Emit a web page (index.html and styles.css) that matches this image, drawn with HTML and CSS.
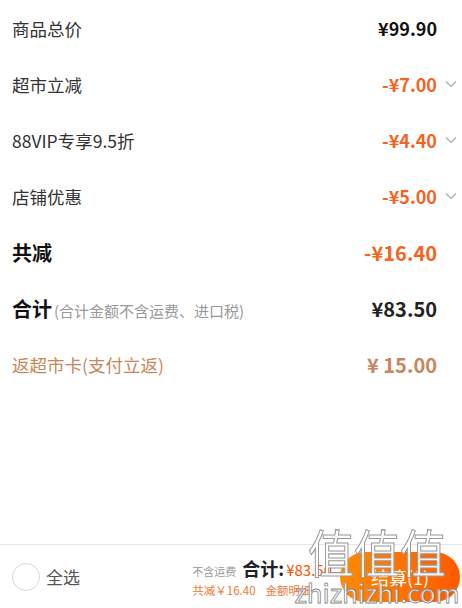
FILE: index.html
```html
<!DOCTYPE html>
<html lang="zh-CN">
<head>
    <meta charset="UTF-8">
    <meta name="viewport" content="width=device-width, initial-scale=1.0">
    <title>结算明细</title>
    <link rel="stylesheet" href="styles.css">
</head>
<body>
    <div class="page">
        <div class="detail">
            <div class="row">
                <span class="label">商品总价</span>
                <span class="value">¥99.90</span>
                <span class="slot"></span>
            </div>
            <div class="row">
                <span class="label">超市立减</span>
                <span class="value minus">-¥7.00</span>
                <span class="slot"><svg class="arrow" viewBox="0 0 12 8"><path d="M1 1.5 L6 6.5 L11 1.5" /></svg></span>
            </div>
            <div class="row">
                <span class="label">88VIP专享9.5折</span>
                <span class="value minus">-¥4.40</span>
                <span class="slot"><svg class="arrow" viewBox="0 0 12 8"><path d="M1 1.5 L6 6.5 L11 1.5" /></svg></span>
            </div>
            <div class="row">
                <span class="label">店铺优惠</span>
                <span class="value minus">-¥5.00</span>
                <span class="slot"><svg class="arrow" viewBox="0 0 12 8"><path d="M1 1.5 L6 6.5 L11 1.5" /></svg></span>
            </div>
            <div class="row">
                <span class="label strong">共减</span>
                <span class="value minus big">-¥16.40</span>
                <span class="slot"></span>
            </div>
            <div class="row">
                <span class="label strong">合计<span class="note">(合计金额不含运费、进口税)</span></span>
                <span class="value big dark">¥83.50</span>
                <span class="slot"></span>
            </div>
            <div class="row">
                <span class="label card">返超市卡(支付立返)</span>
                <span class="value big card">¥ 15.00</span>
                <span class="slot"></span>
            </div>
        </div>

        <div class="footer">
            <div class="select">
                <span class="radio"></span>
                <span class="select-text">全选</span>
            </div>
            <div class="summary">
                <div class="sum-line">
                    <span class="nofee">不含运费</span>
                    <span class="total-label">合计:</span>
                    <span class="total-value">¥83.50</span>
                </div>
                <div class="sum-line sub">
                    <span>共减￥16.40</span>
                    <span class="more">金额明细</span>
                </div>
            </div>
            <button class="pay">结算(1)</button>
            <div class="watermark">
                <span class="wm-big">值值值</span>
                <span class="wm-small">zhizhizhi.com</span>
            </div>
        </div>
    </div>
</body>
</html>
```

FILE: styles.css
```css
body {
    margin: 0;
    background-color: white;
    font-family: "Noto Sans CJK SC", "Noto Sans", sans-serif;
}

.page {
    width: 462px;
    height: 608px;
    display: flex;
    flex-direction: column;
    overflow: hidden;
}

.detail {
    flex: 1;
}

.row {
    height: 56px;
    display: flex;
    align-items: center;
    padding: 0 5px 0 12px;
}

.label {
    flex: 1;
    font-size: 17.5px;
    color: #333;
    white-space: nowrap;
}

.label.strong {
    font-size: 20px;
    font-weight: bold;
    color: #111;
}

.note {
    font-size: 15px;
    font-weight: normal;
    color: #999;
    margin-left: 2px;
}

.value {
    font-size: 18px;
    font-weight: bold;
    color: #111;
}

.value.big {
    font-size: 20px;
}

.value.dark {
    color: #222;
}

.minus {
    color: #f5641e;
}

.card {
    color: #c8875a;
}

.value.card {
    color: #c8875a;
}

.slot {
    width: 20px;
    display: flex;
    justify-content: flex-end;
}

.arrow {
    width: 12px;
    height: 8px;
    fill: none;
    stroke: #aaa;
    stroke-width: 1.2;
}

.footer {
    position: relative;
    height: 63px;
    border-top: 1px solid #e8e8e8;
    display: flex;
    align-items: center;
    padding: 0 2px 0 12px;
}

.select {
    display: flex;
    align-items: center;
    flex: 1;
}

.radio {
    width: 26px;
    height: 26px;
    border: 1.5px solid #d6d6d6;
    border-radius: 50%;
}

.select-text {
    margin-left: 6px;
    font-size: 17px;
    color: #555;
}

.summary {
    display: flex;
    flex-direction: column;
    gap: 1px;
    margin-right: 8px;
}

.sum-line {
    display: flex;
    align-items: baseline;
    white-space: nowrap;
}

.nofee {
    font-size: 11px;
    color: #999;
    margin-right: 6px;
}

.total-label {
    font-size: 18px;
    font-weight: bold;
    color: #222;
}

.total-value {
    font-size: 15px;
    color: #ff5000;
    margin-left: 2px;
}

.sub {
    font-size: 11.5px;
    color: #f07a3a;
}

.more {
    margin-left: 10px;
}

.pay {
    width: 120px;
    height: 50px;
    border: none;
    border-radius: 25px;
    background: linear-gradient(90deg, #ff8a00, #ff5a00);
    color: white;
    font-size: 18px;
    font-family: "Noto Sans CJK SC", "Noto Sans", sans-serif;
}

.watermark {
    position: absolute;
    left: 302px;
    top: -22px;
    width: 150px;
    display: flex;
    flex-direction: column;
    align-items: center;
    pointer-events: none;
}

.wm-big {
    font-size: 46px;
    line-height: 56px;
    color: rgba(255, 255, 255, 0.9);
    -webkit-text-stroke: 1px #999;
    transform: scaleY(1.12);
}

.wm-small {
    font-size: 26px;
    line-height: 26px;
    color: rgba(255, 255, 255, 0.9);
    -webkit-text-stroke: 0.8px #888;
}
```
